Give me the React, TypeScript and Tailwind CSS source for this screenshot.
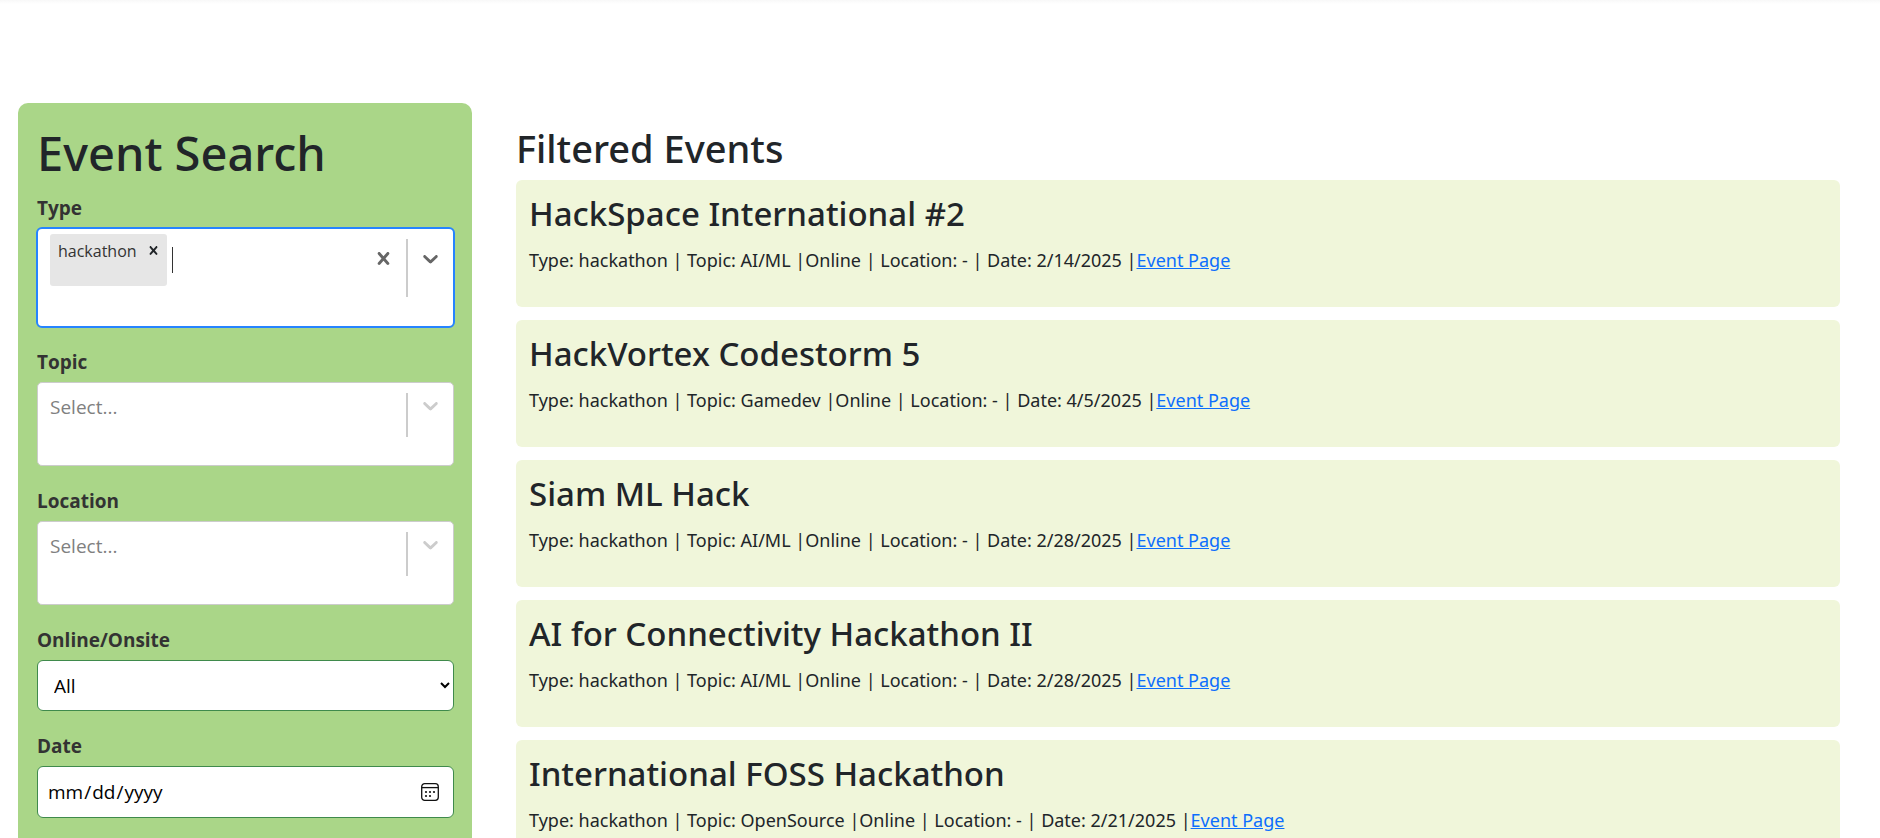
import { useState } from "react";
import type { ReactNode } from "react";

type EventItem = { title: string; topic: string; date: string };

const events: EventItem[] = [
  { title: "HackSpace International #2", topic: "AI/ML", date: "2/14/2025" },
  { title: "HackVortex Codestorm 5", topic: "Gamedev", date: "4/5/2025" },
  { title: "Siam ML Hack", topic: "AI/ML", date: "2/28/2025" },
  { title: "AI for Connectivity Hackathon II", topic: "AI/ML", date: "2/28/2025" },
  { title: "International FOSS Hackathon", topic: "OpenSource", date: "2/21/2025" },
];

const CROSS =
  "M14.348 14.849c-0.469 0.469-1.229 0.469-1.697 0l-2.651-3.030-2.651 3.029c-0.469 0.469-1.229 0.469-1.697 0-0.469-0.469-0.469-1.229 0-1.697l2.758-3.15-2.759-3.152c-0.469-0.469-0.469-1.228 0-1.697s1.228-0.469 1.697 0l2.652 3.031 2.651-3.031c0.469-0.469 1.228-0.469 1.697 0s0.469 1.229 0 1.697l-2.758 3.152 2.758 3.15c0.469 0.469 0.469 1.229 0 1.698z";
const CHEVRON =
  "M4.516 7.548c0.436-0.446 1.043-0.481 1.576 0l3.908 3.747 3.908-3.747c0.533-0.481 1.141-0.446 1.574 0 0.436 0.445 0.408 1.197 0 1.615-0.406 0.418-4.695 4.502-4.695 4.502-0.217 0.223-0.502 0.335-0.787 0.335s-0.57-0.112-0.789-0.335c0 0-4.287-4.084-4.695-4.502s-0.436-1.17 0-1.615z";

function Glyph({ d, className }: { d: string; className: string }) {
  return (
    <svg viewBox="0 0 20 20" className={className} fill="currentColor" aria-hidden="true">
      <path d={d} />
    </svg>
  );
}

function Field({ id, label, children }: { id: string; label: string; children: ReactNode }) {
  return (
    <div className="flex flex-col">
      <label htmlFor={id} className="mb-[5px] text-[19px] leading-[30px] font-bold text-[#333333]">
        {label}
      </label>
      {children}
    </div>
  );
}

function EmptyCombo({ id }: { id: string }) {
  return (
    <div className="flex h-[84px] items-start rounded-[5px] border border-[#cccccc] bg-white">
      <input
        id={id}
        type="text"
        placeholder="Select..."
        className="mt-2 h-8 min-w-0 flex-1 pl-3 text-[19px] text-[#333333] outline-none placeholder:text-[#808080]"
      />
      <span className="mt-[10px] h-11 w-[2px] bg-[#cccccc]" />
      <button type="button" aria-label="Open options" className="px-[10px] pt-[10px] text-[#cccccc]">
        <Glyph d={CHEVRON} className="size-[25px]" />
      </button>
    </div>
  );
}

function TypeCombo({ id }: { id: string }) {
  return (
    <div className="-m-px flex h-[101px] items-start rounded-[6px] border-2 border-[#2684ff] bg-white">
      <div className="ml-3 mt-[5px] flex h-[52px] items-start rounded-[3px] bg-[#e6e6e6] text-[#333333]">
        <span className="pt-1 pl-2 text-[16px] leading-[26px]">hackathon</span>
        <button type="button" aria-label="Remove hackathon" className="pt-2 pr-[5px] pl-2 text-[#212529]">
          <Glyph d={CROSS} className="size-[17px]" />
        </button>
      </div>
      <span className="mt-[18px] ml-[5px] h-[26px] w-px bg-[#333333]" />
      <input id={id} type="text" className="mt-[18px] h-[26px] min-w-0 flex-1 text-[19px] outline-none" />
      <button type="button" aria-label="Clear" className="px-[10px] pt-[17px] text-[#666666]">
        <Glyph d={CROSS} className="size-[25px]" />
      </button>
      <span className="mt-[10px] h-[58px] w-[2px] bg-[#cccccc]" />
      <button type="button" aria-label="Open options" className="px-[10px] pt-[17px] text-[#666666]">
        <Glyph d={CHEVRON} className="size-[25px]" />
      </button>
    </div>
  );
}

function CalendarIcon() {
  return (
    <svg
      viewBox="0 0 18 18"
      className="pointer-events-none absolute top-[17px] right-[15px] size-[18px]"
      fill="none"
      stroke="#111111"
      strokeWidth="1.3"
      aria-hidden="true"
    >
      <rect x="0.7" y="0.7" width="16.6" height="16.6" rx="3" />
      <path d="M0.7 4.6H17.3" />
      <g fill="#111111" stroke="none">
        <circle cx="5" cy="9" r="1.1" />
        <circle cx="9" cy="9" r="1.1" />
        <circle cx="13" cy="9" r="1.1" />
        <circle cx="5" cy="13" r="1.1" />
        <circle cx="9" cy="13" r="1.1" />
      </g>
    </svg>
  );
}

function EventCard({ event }: { event: EventItem }) {
  return (
    <article className="rounded-[6px] bg-[#f0f6da] px-[13px] pt-[13px] pb-3">
      <h3 className="mb-[10px] text-[33px] leading-[42px] font-medium">{event.title}</h3>
      <p className="mb-5 text-[18px] leading-[30px]">
        Type: hackathon | Topic: {event.topic} |Online | Location: - | Date: {event.date} |
        <a href="#event" className="text-[#0d6efd] underline">
          Event Page
        </a>
      </p>
    </article>
  );
}

export default function App() {
  const [mode, setMode] = useState("All");
  return (
    <div className="h-screen overflow-hidden bg-white font-['Noto_Sans',sans-serif] text-[#212529]">
      <div className="h-1 bg-gradient-to-b from-[#f8f8f8] to-white" />
      <main className="flex items-start gap-11 pt-[99px] pr-10 pl-[18px]">
        <aside className="w-[454px] shrink-0 rounded-[10px] bg-[#aad688] pt-5 pr-[18px] pb-10 pl-[19px] font-['Open_Sans',sans-serif]">
          <h1 className="mb-[10px] font-['Noto_Sans',sans-serif] text-[47px] leading-[60px] font-medium">
            Event Search
          </h1>
          <form className="flex flex-col gap-5">
            <Field id="type" label="Type">
              <TypeCombo id="type" />
            </Field>
            <Field id="topic" label="Topic">
              <EmptyCombo id="topic" />
            </Field>
            <Field id="location" label="Location">
              <EmptyCombo id="location" />
            </Field>
            <Field id="mode" label="Online/Onsite">
              <select
                id="mode"
                value={mode}
                onChange={(e) => setMode(e.target.value)}
                className="h-[51px] w-full rounded-[6px] border border-[#3f8a4c] bg-white pl-3 text-[19px] text-black"
              >
                <option>All</option>
                <option>Online</option>
                <option>Onsite</option>
              </select>
            </Field>
            <Field id="date" label="Date">
              <div className="relative">
                <input
                  id="date"
                  type="date"
                  className="h-[52px] w-full rounded-[6px] border border-[#3f8a4c] bg-white px-[9px] text-[19px] text-black [&::-webkit-calendar-picker-indicator]:opacity-0"
                />
                <CalendarIcon />
              </div>
            </Field>
          </form>
        </aside>
        <section className="min-w-0 flex-1 pt-[21px]">
          <h2 className="mb-2 text-[38px] leading-[48px] font-medium">Filtered Events</h2>
          <div className="flex flex-col gap-[13px]">
            {events.map((event) => (
              <EventCard key={event.title} event={event} />
            ))}
          </div>
        </section>
      </main>
    </div>
  );
}
